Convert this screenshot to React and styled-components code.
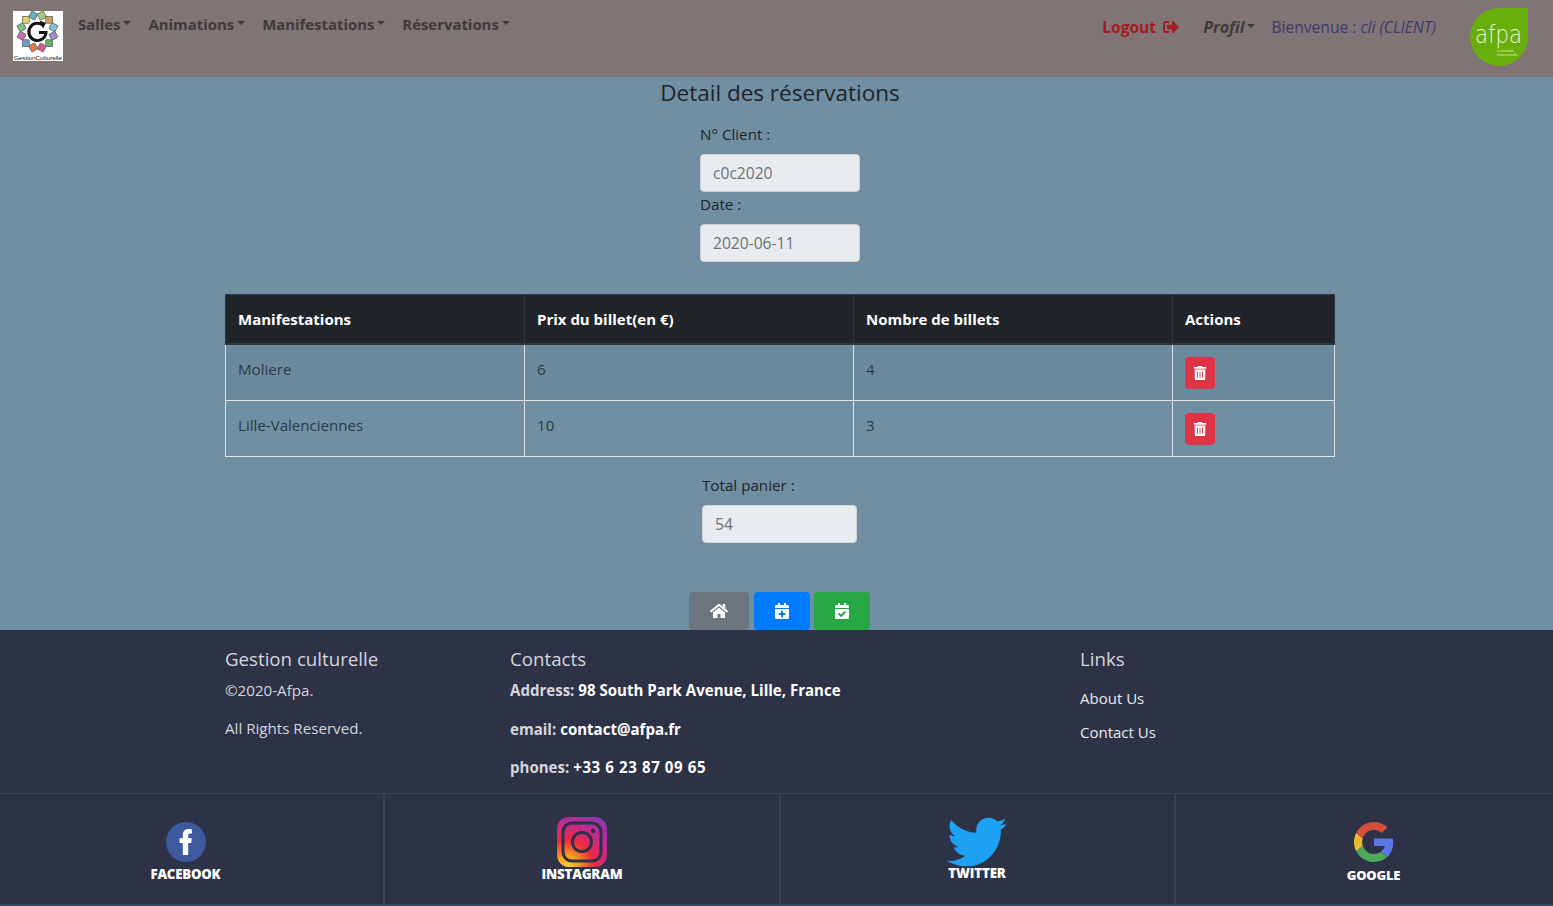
import React from 'react';
import styled, { createGlobalStyle } from 'styled-components';
import { FaHome, FaTrashAlt, FaCalendarPlus, FaCalendarCheck, FaSignOutAlt, FaTwitter } from 'react-icons/fa';

const Global = createGlobalStyle`
  * { box-sizing: border-box; }
  html, body { margin: 0; padding: 0; }
  body { font-family: "Open Sans", "Noto Sans", sans-serif; font-size: 15px; line-height: 24px; color: #212529; background: #708fa3; }
`;
const Page = styled.div`width: 1553px; height: 906px; overflow: hidden; display: flex; flex-direction: column;`;
const Navbar = styled.nav`height: 77px; flex: none; background: #807574; display: flex; align-items: flex-start; padding: 8px 24px 0 13px;`;
const LogoBox = styled.div`width: 50px; height: 50px; margin-top: 3px; background: #fff; flex: none;`;
const NavLinks = styled.div`display: flex; margin-left: 15px; gap: 17px; padding-top: 4px;`;
const NavLink = styled.span`
  font-weight: 700; font-size: ${p => p.$italic ? 16 : 14.9}px; color: #3e3b3b; display: inline-flex; align-items: center; font-style: ${p => p.$italic ? 'italic' : 'normal'};
  &::after { content: ""; margin-left: 3px; margin-top: -3px; border-top: 4px solid #3e3b3b; border-left: 4px solid transparent; border-right: 4px solid transparent; }
`;
const NavRight = styled.div`margin-left: auto; display: flex; align-items: flex-start; padding-top: 7px;`;
const Logout = styled.span`font-weight: 700; font-size: 15.6px; color: #a31c22; display: inline-flex; align-items: center; gap: 7px; margin-right: 24px; margin-left: -1px;`;
const Welcome = styled.span`color: #3c3a6b; font-size: 15.6px; margin-left: 16px; i { font-style: italic; }`;
const Leaf = styled.svg`margin-left: 33px; margin-top: -7px; flex: none;`;

const Main = styled.main`flex: none; height: 553px; padding-left: 7px; display: flex; flex-direction: column; align-items: center;`;
const Title = styled.h1`margin: 0; font-weight: 400; font-size: 22.5px; line-height: 32px; width: 100%; text-align: center; color: #212529;`;
const FieldGroup = styled.div`width: ${p => p.$w}px; display: flex; flex-direction: column; margin-left: ${p => p.$ml || 0}px;`;
const Label = styled.label`display: block; height: 24px; line-height: 24px; font-size: 15.2px; color: #212529;`;
const Input = styled.div`height: 38px; margin-top: ${p => p.$mt}px; background: #e9ecef; border: 1px solid #ced4da; border-radius: 4px; padding: 0 12px; line-height: 36px; color: #6b7278; font-size: 15.6px;`;
const Spaced = styled.div`margin-top: ${p => p.$t}px; width: 100%; display: flex; flex-direction: column; align-items: center;`;
const Table = styled.table`width: 1109px; border-collapse: collapse; table-layout: fixed; font-size: 15.1px;
  td, th { border: 1px solid #dee2e6; padding: 12px; text-align: left; vertical-align: top; }
  th { background: #212529; color: #fff; border-color: #32383e; border-bottom-width: 2px; font-weight: 700; font-size: 15px; height: 49px; padding-bottom: 11px; }
  td { height: 56px; padding-bottom: 11px; color: #2b3a46; }
  tbody tr:first-child td { background: #6c8a9e; }
`;
const Col = styled.col`width: ${p => p.$w}px;`;
const DeleteButton = styled.button`width: 30px; height: 32px; background: #dc3545; color: #fff; border: 0; border-radius: 4px; display: flex; align-items: center; justify-content: center; padding: 0; font-size: 14px;`;
const Actions = styled.div`display: flex; justify-content: center; gap: 4px; margin-top: 49px; margin-left: -1px;`;
const ActionButton = styled.button`width: ${p => p.$w}px; height: 38px; margin-right: ${p => p.$mr || 0}px; border: 0; border-radius: 4px; color: #fff; background: ${p => p.$bg}; display: flex; align-items: center; justify-content: center; padding: 0; font-size: 16px;`;

const Footer = styled.footer`flex: 1; background: #2d3246; display: flex; flex-direction: column; color: #fff;`;
const FooterTop = styled.div`height: 164px; border-bottom: 1px solid #3c4256; padding: 16px 0 0 225px; display: flex; flex: none;`;
const FooterCol = styled.div`width: ${p => p.$w}px; flex: none;`;
const FooterHeading = styled.h5`margin: 0 0 6px; font-weight: 400; font-size: 18.7px; line-height: 26px; color: #d4d6dc;`;
const FooterText = styled.p`margin: 0 0 14px; height: 24px; font-size: 15.15px; color: #d4d6dc;`;
const FooterInfo = styled.p`margin: 0 0 14.5px; height: 24px; font-size: 15.05px; font-weight: 700; color: #fff; span { color: #d4d6dc; }`;
const PhoneNumber = styled.b`font-weight: 700; letter-spacing: 0.6px;`;
const FooterLink = styled.a`display: block; margin-bottom: 10px; font-size: 15px; color: #e9ebef;`;
const LinksList = styled.div`padding-top: 8px;`;
const Socials = styled.div`flex: 1; display: grid; grid-template-columns: 385px 396px 395px 1fr; border-bottom: 2px solid #2f4a5f;`;
const SocialCell = styled.div`border-right: ${p => p.$last ? '0' : '2px solid #3c4256'}; display: flex; flex-direction: column; align-items: center; justify-content: flex-start; padding-top: ${p => p.$pt}px; padding-left: ${p => p.$pl || 0}px; padding-right: ${p => p.$pr || 0}px;`;
const SocialLabel = styled.span`font-weight: 800; font-size: ${p => p.$size || 13.4}px; line-height: 16px; color: #fff; letter-spacing: -0.2px; margin-top: ${p => p.$mt || 0}px;`;

const tileColors = ['#7fc4d8','#9a8fd0','#5fb36a','#d25c8f','#e07b4a','#6e9fd0','#c86fb8','#7ac47f','#e2d765','#5fb0c0','#a0cf70','#d0a060'];
const GestionLogo = () => (
  <svg width="50" height="50" viewBox="0 0 50 50">
    {tileColors.map((c, i) => {
      const a = (i / 12) * Math.PI * 2 - Math.PI / 12;
      const x = 24.5 + Math.cos(a) * 16.5;
      const y = 20.5 + Math.sin(a) * 16.5;
      return <rect key={i} x={x - 3.4} y={y - 3.4} width="6.8" height="6.8" fill={c} stroke="#666" strokeWidth=".8" transform={`rotate(${i * 30 + 30} ${x} ${y})`} />;
    })}
    <circle cx="24.5" cy="20.5" r="11.5" fill="#fff" />
    <path d="M30.5 14.8A8.6 8.6 0 1 0 33 21.5H26" fill="none" stroke="#111" strokeWidth="3" />
    <path d="M26.5 9.5l6.5 2.5-3 5.5z" fill="#111" />
    <text x="25" y="48.5" fontSize="6" textAnchor="middle" fontFamily="Liberation Sans, sans-serif" fill="#111" textLength="48" lengthAdjust="spacingAndGlyphs">GestionCulturelle</text>
  </svg>
);

const AfpaLeaf = () => (
  <Leaf width="60" height="58" viewBox="0 0 60 58">
    <path d="M59 0V29A29 29 0 1 1 30 0Z" fill="#68ae0c" />
    <text x="29.5" y="35" fontSize="24" fontWeight="200" textAnchor="middle" fontFamily="DejaVu Sans, sans-serif" fill="#eef6dc" textLength="47" lengthAdjust="spacingAndGlyphs">afpa</text>
    <text x="28" y="44" fontSize="3" fontFamily="Liberation Sans, sans-serif" fill="#dcedc0">La formation</text>
    <text x="28" y="47.5" fontSize="3" fontFamily="Liberation Sans, sans-serif" fill="#dcedc0">professionnelle</text>
  </Leaf>
);

const FacebookIcon = () => (
  <svg width="40" height="40" viewBox="0 0 40 40">
    <circle cx="20" cy="20" r="20" fill="#3d5a9e" />
    <path d="M16.8 33V21h-3.3v-4.8h3.3V13c0-4 2.4-6 6-6 1.5 0 2.7.1 3.1.2v4.2h-2c-1.5 0-1.7.9-1.7 2.2v2.6h3.6l-.6 4.8h-3V33Z" fill="#fff" />
  </svg>
);
const InstagramIcon = () => (
  <svg width="50" height="50" viewBox="0 0 50 50">
    <defs>
      <radialGradient id="ig" cx="0.2" cy="1" r="1.25">
        <stop offset="0" stopColor="#fdd835" />
        <stop offset=".18" stopColor="#f9a01e" />
        <stop offset=".42" stopColor="#ee2a3e" />
        <stop offset=".68" stopColor="#c32b8c" />
        <stop offset="1" stopColor="#7a3cbc" />
      </radialGradient>
    </defs>
    <rect width="50" height="50" rx="12" fill="url(#ig)" />
    <rect x="6" y="6" width="38" height="38" rx="9" fill="none" stroke="#2d3246" strokeWidth="3" />
    <circle cx="25" cy="25" r="9.5" fill="none" stroke="#2d3246" strokeWidth="3" />
    <circle cx="36" cy="14" r="2.2" fill="#2d3246" />
  </svg>
);
const GoogleIcon = () => (
  <svg width="40" height="40" viewBox="0 0 48 48">
    <path fill="#5b78e6" d="M47 24.5c0-1.6-.1-3.2-.4-4.7H24v9h13a11 11 0 0 1-4.8 7.3l7.7 6C44.4 37.9 47 31.8 47 24.5Z" />
    <path fill="#4fa85a" d="M24 48c6.5 0 11.9-2.1 15.9-5.9l-7.7-6c-2.2 1.5-5 2.3-8.2 2.3-6.3 0-11.6-4.2-13.5-9.9l-8 6.2C6.5 42.6 14.6 48 24 48Z" />
    <path fill="#e8b92f" d="M10.5 28.5a14.4 14.4 0 0 1 0-9l-8-6.2a24 24 0 0 0 0 21.4Z" />
    <path fill="#d34f3c" d="M24 9.6c3.5 0 6.7 1.2 9.2 3.6l6.9-6.9C35.9 2.4 30.5 0 24 0 14.6 0 6.5 5.4 2.5 13.3l8 6.2C12.4 13.8 17.7 9.6 24 9.6Z" />
  </svg>
);

export default function App() {
  return (
    <Page>
      <Global />
      <Navbar>
        <LogoBox><GestionLogo /></LogoBox>
        <NavLinks>
          <NavLink>Salles</NavLink>
          <NavLink>Animations</NavLink>
          <NavLink>Manifestations</NavLink>
          <NavLink>Réservations</NavLink>
        </NavLinks>
        <NavRight>
          <Logout>Logout <FaSignOutAlt size={16} /></Logout>
          <NavLink $italic>Profil</NavLink>
          <Welcome>Bienvenue : <i>cli (CLIENT)</i></Welcome>
          <AfpaLeaf />
        </NavRight>
      </Navbar>
      <Main>
        <Title>Detail des réservations</Title>
        <Spaced $t={13}>
          <FieldGroup $w={160}>
            <Label>N° Client :</Label>
            <Input $mt={8}>c0c2020</Input>
            <Label>Date :</Label>
            <Input $mt={8}>2020-06-11</Input>
          </FieldGroup>
        </Spaced>
        <Spaced $t={32}>
          <Table>
            <colgroup><Col $w={299} /><Col $w={329} /><Col $w={319} /><Col $w={162} /></colgroup>
            <thead>
              <tr><th>Manifestations</th><th>Prix du billet(en €)</th><th>Nombre de billets</th><th>Actions</th></tr>
            </thead>
            <tbody>
              <tr><td>Moliere</td><td>6</td><td>4</td><td><DeleteButton><FaTrashAlt /></DeleteButton></td></tr>
              <tr><td>Lille-Valenciennes</td><td>10</td><td>3</td><td><DeleteButton><FaTrashAlt /></DeleteButton></td></tr>
            </tbody>
          </Table>
        </Spaced>
        <Spaced $t={16}>
          <FieldGroup $w={155} $ml={-1}>
            <Label>Total panier :</Label>
            <Input $mt={8}>54</Input>
          </FieldGroup>
        </Spaced>
        <Actions>
          <ActionButton $w={60} $bg="#6c757d" $mr={1}><FaHome size={18} /></ActionButton>
          <ActionButton $w={56} $bg="#007bff"><FaCalendarPlus /></ActionButton>
          <ActionButton $w={56} $bg="#28a745"><FaCalendarCheck /></ActionButton>
        </Actions>
      </Main>
      <Footer>
        <FooterTop>
          <FooterCol $w={285}>
            <FooterHeading>Gestion culturelle</FooterHeading>
            <FooterText>©2020-Afpa.</FooterText>
            <FooterText>All Rights Reserved.</FooterText>
          </FooterCol>
          <FooterCol $w={570}>
            <FooterHeading>Contacts</FooterHeading>
            <FooterInfo><span>Address:</span> 98 South Park Avenue, Lille, France</FooterInfo>
            <FooterInfo><span>email:</span> contact@afpa.fr</FooterInfo>
            <FooterInfo><span>phones:</span> <PhoneNumber>+33 6 23 87 09 65</PhoneNumber></FooterInfo>
          </FooterCol>
          <FooterCol $w={285}>
            <FooterHeading>Links</FooterHeading>
            <LinksList>
              <FooterLink>About Us</FooterLink>
              <FooterLink>Contact Us</FooterLink>
            </LinksList>
          </FooterCol>
        </FooterTop>
        <Socials>
          <SocialCell $pt={28} $pr={12}><FacebookIcon /><SocialLabel $mt={4} $size={13.2}>FACEBOOK</SocialLabel></SocialCell>
          <SocialCell $pt={23}><InstagramIcon /><SocialLabel $mt={-1}>INSTAGRAM</SocialLabel></SocialCell>
          <SocialCell $pt={18} $pr={1}><FaTwitter size={60} color="#1da1f2" /><SocialLabel $mt={-7}>TWITTER</SocialLabel></SocialCell>
          <SocialCell $last $pt={28} $pl={18}><GoogleIcon /><SocialLabel $mt={5} $size={13}>GOOGLE</SocialLabel></SocialCell>
        </Socials>
      </Footer>
    </Page>
  );
}
